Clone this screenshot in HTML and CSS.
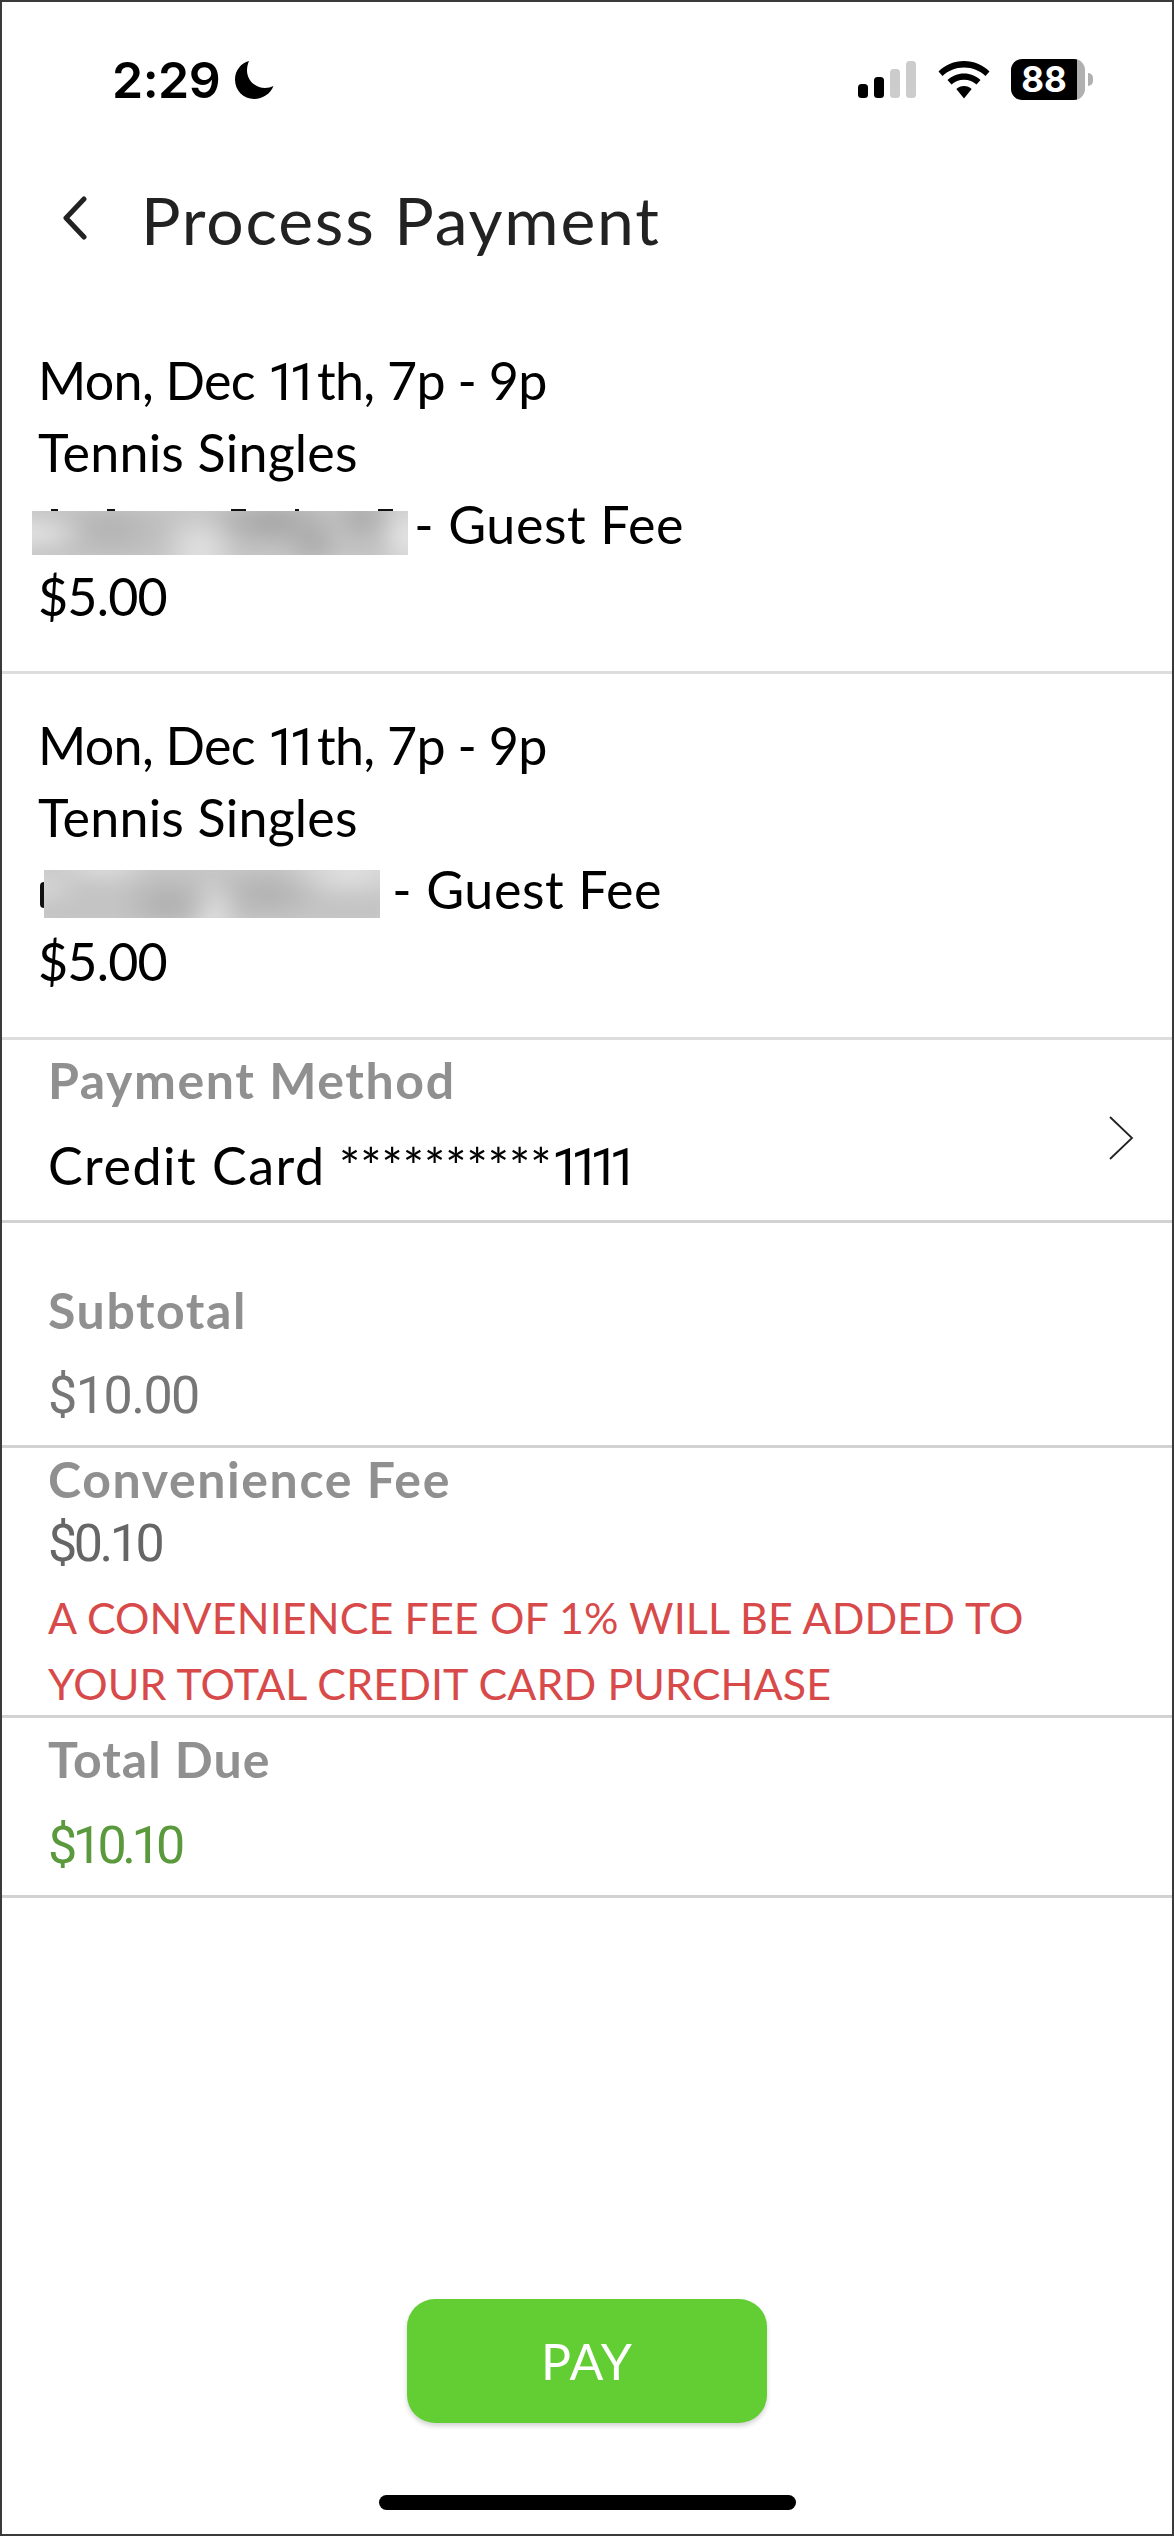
FILE: index.html
```html
<!DOCTYPE html>
<html lang="en">
<head>
<meta charset="utf-8">
<title>Process Payment</title>
<link rel="stylesheet" href="styles.css">
</head>
<body>
<div class="screen">
  <div class="status">
    <div class="status-left">
      <span class="time">2:29</span>
      <svg class="moon" width="40" height="40" viewBox="0 0 40 40"><path d="M15 1C7 3 1 10.500 1 19.500C1 30.500 9.500 39 20 39C29 39 36.500 33.500 39.500 26C37 27.200 34 28 31 28C21 28 13 20 13 10.500C13 7 13.800 3.800 15 1Z" fill="#000"/></svg>
    </div>
    <div class="status-right">
      <svg class="signal" width="58" height="38" viewBox="0 0 58 38">
        <rect x="0" y="23" width="10" height="14" rx="3.500" fill="#000"/>
        <rect x="16" y="16" width="10" height="21" rx="3.500" fill="#000"/>
        <rect x="32" y="8" width="10" height="29" rx="3.500" fill="#ccc"/>
        <rect x="48" y="0" width="10" height="37" rx="3.500" fill="#ccc"/>
      </svg>
      <svg class="wifi" width="52" height="38" viewBox="0 0 52 38">
        <path d="M26 0C16 0 7.500 3.800 0.500 10.500L4.500 15C10.500 9.500 17.500 6.500 26 6.500C34.500 6.500 41.500 9.500 47.500 15L51.500 10.500C44.500 3.800 36 0 26 0Z" fill="#000"/>
        <path d="M26 12.500C19.500 12.500 14 15 9.500 19L13.500 23.500C17 20.500 21 18.800 26 18.800C31 18.800 35 20.500 38.500 23.500L42.500 19C38 15 32.500 12.500 26 12.500Z" fill="#000"/>
        <path d="M26 25C23 25 20.500 26 18.300 28L26 37.500L33.700 28C31.500 26 29 25 26 25Z" fill="#000"/>
      </svg>
      <div class="battery">
        <div class="battery-body">
          <span class="battery-level">88</span>
          <span class="battery-rest"></span>
        </div>
        <span class="battery-nub"></span>
      </div>
    </div>
  </div>

  <header class="header">
    <svg class="back" width="28" height="44" viewBox="0 0 28 44"><path d="M24 3L6 22L24 41" fill="none" stroke="#222" stroke-width="5" stroke-linecap="round" stroke-linejoin="round"/></svg>
    <h1 class="title">Process Payment</h1>
  </header>

  <section class="fee-item fee-first">
    <div class="line line-date">Mon, Dec <span class="ones">11</span>th, 7p - 9p</div>
    <div class="line line-name">Tennis Singles</div>
    <div class="line"><span class="redact redact-a"><span class="smudge"></span></span> <span class="guest">- Guest Fee</span></div>
    <div class="line line-money">$5.00</div>
  </section>

  <section class="fee-item fee-second">
    <div class="line line-date">Mon, Dec <span class="ones">11</span>th, 7p - 9p</div>
    <div class="line line-name">Tennis Singles</div>
    <div class="line"><span class="redact redact-b"><span class="smudge"></span></span> <span class="guest">- Guest Fee</span></div>
    <div class="line line-money">$5.00</div>
  </section>

  <section class="row method">
    <div class="label method-label">Payment Method</div>
    <div class="method-value"><span class="card-name">Credit Card</span> <span class="card-stars">**********</span><span class="card-ones">1111</span></div>
    <svg class="chevron" width="26" height="44" viewBox="0 0 26 44"><path d="M2 1L24 22L2 43" fill="none" stroke="#222" stroke-width="1.800"/></svg>
  </section>

  <section class="row subtotal">
    <div class="label subtotal-label">Subtotal</div>
    <div class="amount subtotal-value">$10.00</div>
  </section>

  <section class="row fee">
    <div class="label fee-label">Convenience Fee</div>
    <div class="amount fee-value">$0.10</div>
    <p class="notice">A CONVENIENCE FEE OF 1% WILL BE ADDED TO YOUR TOTAL CREDIT CARD PURCHASE</p>
  </section>

  <section class="row total">
    <div class="label total-label">Total Due</div>
    <div class="amount total-value">$10.10</div>
  </section>

  <div class="spacer"></div>

  <div class="pay-wrap"><button class="pay">PAY</button></div>
  <div class="home-wrap"><span class="home"></span></div>
</div>
</body>
</html>
```
FILE: styles.css
```css
* { box-sizing: border-box; }
html, body { margin: 0; padding: 0; background: #fff; }
.screen {
  width: 1174px; height: 2536px;
  border: 2px solid #3a3a3a;
  background: #fff;
  display: flex; flex-direction: column;
  font-family: "Lato", "Liberation Sans", sans-serif;
  color: #000;
  overflow: hidden;
}
.status {
  height: 102px; flex: none;
  padding: 57px 0 0 110px;
  display: flex; justify-content: space-between; align-items: flex-start;
}
.status-left { display: flex; align-items: center; height: 42px; }
.time { font-family: "Inter", sans-serif; font-weight: 600; font-size: 50px; line-height: 42px; letter-spacing: -0.5px; color: #000; }
.moon { margin-left: 14px; }
.status-right { display: flex; align-items: flex-start; margin-right: 79px; }
.signal { margin: 2px 0 0 0; }
.wifi { margin: 2px 0 0 22px; }
.battery { display: flex; align-items: center; margin-left: 21px; }
.battery-body { display: flex; width: 74px; height: 41px; border-radius: 11px; overflow: hidden; }
.battery-level { width: 66px; background: #000; color: #fff; font-family: "Inter", sans-serif; font-weight: 700; font-size: 35px; line-height: 41px; text-align: center; }
.battery-rest { flex: 1; background: #b0b0b0; }
.battery-nub { width: 5px; height: 13px; background: #b0b0b0; border-radius: 0 6px 6px 0; margin-left: 3px; }

.header { height: 100px; flex: none; display: flex; align-items: flex-start; padding: 0 0 0 58px; }
.back { flex: none; margin-top: 92px; }
.title { margin: 0 0 0 53px; font-weight: 400; font-size: 66px; line-height: 72px; letter-spacing: 1.800px; color: #222; padding-top: 80px; height: 100px; box-sizing: border-box; white-space: nowrap; }

.fee-item { flex: none; border-bottom: 3px solid #ddd; padding: 0 0 0 36px; }
.fee-first { height: 470px; padding-top: 140px; }
.fee-second { height: 366px; padding-top: 35px; }
.line { font-size: 52px; line-height: 72px; height: 72px; white-space: nowrap; }
.line-date { letter-spacing: -0.7px; }
.line-name { letter-spacing: 0.2px; }
.ones { font-family: "Roboto", sans-serif; letter-spacing: -8px; margin-right: 7px; }
.line-money { letter-spacing: -0.8px; }
.guest { letter-spacing: 0.6px; }
.redact { display: inline-block; position: relative; }
.redact-a { width: 376px; height: 44px; margin: 0 -7px 0 -6px; vertical-align: -11px; }
.redact-b { width: 336px; height: 48px; margin: 0 -1px 0 6px; vertical-align: -9px; }
.redact-a::before { content: ""; position: absolute; left: 0; right: 0; top: -2px; height: 2px;
  background: linear-gradient(90deg, transparent 5%, #111 5%, #111 7%, transparent 7%, transparent 20%, #111 20%, #111 22%, transparent 22%, transparent 53%, #111 53%, #111 57%, transparent 57%, transparent 70%, #111 70%, #111 71%, transparent 71%, transparent 92%, #111 92%, #111 96%, transparent 96%); }
.redact-b::before { content: ""; position: absolute; left: -4px; top: 12px; width: 4px; height: 26px; background: #111; border-radius: 4px 0 0 4px; }
.smudge { position: absolute; inset: -14px; filter: blur(8px); clip-path: inset(14px); background-color: #c4c4c4; }
.redact-a .smudge { background-image:
  radial-gradient(ellipse 14% 30% at 4% 50%, #e6e6e6, transparent),
  radial-gradient(ellipse 16% 45% at 23% 45%, #b2b2b2, transparent),
  radial-gradient(ellipse 10% 60% at 45% 75%, #e4e4e4, transparent),
  radial-gradient(ellipse 18% 40% at 63% 35%, #a4a4a4, transparent),
  radial-gradient(ellipse 8% 35% at 73% 65%, #aaa, transparent),
  radial-gradient(ellipse 8% 50% at 85% 25%, #aaa, transparent),
  radial-gradient(ellipse 7% 60% at 96% 55%, #e8e8e8, transparent); }
.redact-b .smudge { background-image:
  radial-gradient(ellipse 15% 25% at 20% 15%, #e0e0e0, transparent),
  radial-gradient(ellipse 14% 40% at 38% 62%, #aeaeae, transparent),
  radial-gradient(ellipse 8% 55% at 50% 80%, #e2e2e2, transparent),
  radial-gradient(ellipse 16% 35% at 65% 50%, #b0b0b0, transparent),
  radial-gradient(ellipse 20% 40% at 88% 20%, #e4e4e4, transparent),
  radial-gradient(ellipse 12% 30% at 3% 40%, #d8d8d8, transparent); }

.row { flex: none; border-bottom: 3px solid #d2d2d2; position: relative; padding-left: 46px; }
.label { font-weight: 700; font-size: 50px; line-height: 56px; letter-spacing: 1.600px; color: #909090; }
.total-label { letter-spacing: 1px; }
.amount { font-family: "Roboto", sans-serif; font-size: 52px; line-height: 60px; }
.method { height: 183px; padding-top: 12px; }
.method-value { font-size: 52px; line-height: 60px; margin-top: 27px; color: #000; white-space: nowrap; }
.card-name { letter-spacing: 1.500px; }
.card-stars { font-size: 50px; }
.card-ones { font-family: "Roboto", sans-serif; letter-spacing: -10px; }
.chevron { position: absolute; right: 38px; top: 76px; }
.subtotal { height: 225px; padding-top: 59px; }
.subtotal-value { color: #777; margin-top: 28px; letter-spacing: -1.500px; }
.fee { height: 270px; padding-top: 3px; }
.fee-value { color: #666; margin-top: 7px; letter-spacing: -3.500px; }
.notice { margin: 11px 0 0; font-size: 43px; line-height: 66px; letter-spacing: 0.1px; color: #d84a4a; width: 1040px; }
.total { height: 180px; padding-top: 13px; }
.total-value { color: #5a9a3c; margin-top: 29px; letter-spacing: -4.500px; }

.spacer { flex: 1; }
.pay-wrap { flex: none; display: flex; justify-content: center; }
.pay {
  width: 360px; height: 124px; border: 0; border-radius: 28px;
  background: #63cd34; color: #fff;
  font-family: "Lato", sans-serif; font-size: 50px; font-weight: 400; letter-spacing: 1px;
  box-shadow: 0 3px 5px rgba(0,0,0,.18);
}
.home-wrap { flex: none; height: 111px; display: flex; justify-content: center; padding-top: 72px; }
.home { width: 417px; height: 15px; border-radius: 8px; background: #000; }
```
